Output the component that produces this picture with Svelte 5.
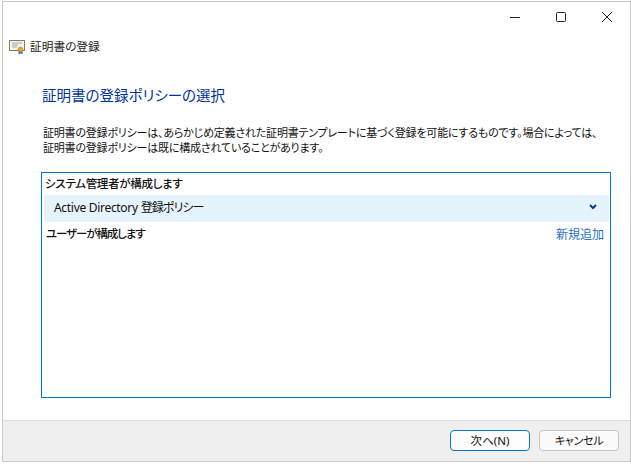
<script>
  const title = '証明書の登録';
</script>

<div class="window">
  <div class="titlebar">
    <div class="caption-btn">
      <svg width="12" height="12" viewBox="0 0 12 12"><path d="M1 6.5H11" stroke="#222" stroke-width="1" fill="none" /></svg>
    </div>
    <div class="caption-btn">
      <svg width="12" height="12" viewBox="0 0 12 12"><rect x="1.5" y="1.5" width="9" height="9" rx="1" stroke="#222" stroke-width="1" fill="none" /></svg>
    </div>
    <div class="caption-btn">
      <svg width="12" height="12" viewBox="0 0 12 12"><path d="M1 1L11 11M11 1L1 11" stroke="#222" stroke-width="1" fill="none" /></svg>
    </div>
  </div>

  <div class="app-title">
    <svg width="16" height="15" viewBox="0 0 16 15">
      <rect x="0.5" y="0.5" width="15" height="10" fill="#f7f3e6" stroke="#8b7a55" />
      <path d="M3 3H13M3 5H9M3 7H8" stroke="#8fa6c0" stroke-width="1" />
      <path d="M9.5 10V14.5L11.5 13.2L13.5 14.5V10Z" fill="#2f6fd0" />
      <circle cx="11.5" cy="9.5" r="2.4" fill="#e9a824" stroke="#b87a12" stroke-width="0.6" />
    </svg>
    <span class="app-name">{title}</span>
  </div>

  <div class="content">
    <h1>証明書の登録ポリシーの選択</h1>
    <p>証明書の登録ポリシーは、あらかじめ定義された証明書テンプレートに基づく登録を可能にするものです。場合によっては、<br />証明書の登録ポリシーは既に構成されていることがあります。</p>

    <div class="panel">
      <div class="group-label">システム管理者が構成します</div>
      <div class="policy-row">
        <span class="policy-name">Active Directory <span class="jp">登録ポリシー</span></span>
        <svg width="8" height="6" viewBox="0 0 8 6"><path d="M1 1L4 4L7 1" stroke="#0a3a8c" stroke-width="2" fill="none" /></svg>
      </div>
      <div class="user-row">
        <span class="group-label user">ユーザーが構成します</span>
        <span class="link">新規追加</span>
      </div>
    </div>
  </div>

  <div class="footer">
    <button class="primary">次へ(N)</button>
    <button class="cancel">キャンセル</button>
  </div>
</div>

<style>
  :global(body) {
    margin: 0;
    background: #fff;
  }
  .window {
    box-sizing: border-box;
    width: 629px;
    height: 461px;
    margin: 1px 0 0 2px;
    border: 1px solid #c9c9c9;
    background: #fff;
    display: flex;
    flex-direction: column;
    font-family: "Noto Sans", "Noto Sans CJK JP", sans-serif;
    font-size: 12px;
    font-feature-settings: "palt";
    color: #111;
  }
  .titlebar {
    display: flex;
    justify-content: flex-end;
    height: 30px;
    flex: none;
  }
  .caption-btn {
    width: 46px;
    height: 30px;
    display: flex;
    align-items: center;
    justify-content: center;
  }
  .app-title {
    display: flex;
    align-items: center;
    gap: 5px;
    height: 30px;
    padding-left: 6px;
    flex: none;
    font-size: 11.7px;
    line-height: 16px;
    color: #222;
  }
  .app-name {
    margin-bottom: 2px;
  }
  .content {
    flex: 1;
    padding: 0 19px 0 38px;
    min-height: 0;
  }
  h1 {
    margin: 22px 0 0 1px;
    font-size: 14.5px;
    font-weight: 400;
    line-height: 22px;
    color: #003399;
  }
  p {
    margin: 19px 0 0 2px;
    font-size: 11px;
    letter-spacing: -0.2px;
    line-height: 15px;
    white-space: nowrap;
  }
  .panel {
    box-sizing: border-box;
    height: 226px;
    margin-top: 17px;
    border: 1px solid #0078d4;
    padding: 2px 1px 0 2px;
  }
  .group-label {
    font-size: 11.5px;
    letter-spacing: -0.3px;
    font-weight: 500;
    line-height: 17px;
    padding-left: 1px;
  }
  .group-label.user {
    letter-spacing: -1.1px;
    padding-left: 2px;
  }
  .policy-row {
    box-sizing: border-box;
    display: flex;
    align-items: center;
    justify-content: space-between;
    height: 27px;
    margin-top: 3px;
    padding: 0 12px 3px 10px;
    background: #e5f3fd;
    border-radius: 2px;
  }
  .policy-name {
    letter-spacing: -0.3px;
  }
  .jp {
    letter-spacing: -0.9px;
  }
  .user-row {
    display: flex;
    justify-content: space-between;
    align-items: center;
    height: 23px;
    padding-right: 5px;
  }
  .link {
    color: #1f6fc4;
  }
  .footer {
    box-sizing: border-box;
    flex: none;
    height: 41px;
    display: flex;
    justify-content: flex-end;
    align-items: flex-start;
    gap: 9px;
    padding: 9px 11px 0 0;
    background: #efefef;
    border-top: 1px solid #dedede;
  }
  button {
    box-sizing: border-box;
    width: 80px;
    height: 21px;
    padding: 0;
    font: inherit;
    font-feature-settings: inherit;
    font-size: 11.5px;
    line-height: 17px;
    color: #111;
    background: #fbfbfb;
    border: 1px solid #c4c4c4;
    border-radius: 4px;
  }
  button.cancel {
    font-size: 11px;
    letter-spacing: -0.3px;
  }
  button.primary {
    border-color: #0078d4;
    background: #fdfdfd;
  }
</style>
